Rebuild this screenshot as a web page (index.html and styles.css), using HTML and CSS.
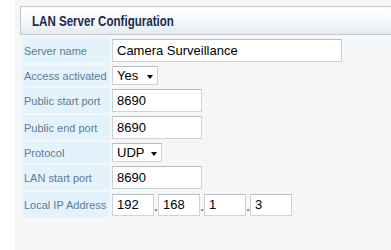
FILE: index.html
```html
<!DOCTYPE html>
<html>
<head>
<meta charset="utf-8">
<link rel="stylesheet" href="styles.css">
</head>
<body>
<div class="panel">
  <div class="header"><span class="title">LAN Server Configuration</span></div>
  <table class="form">
    <tr class="tall">
      <td class="label">Server name</td>
      <td class="value"><div class="input wide">Camera Surveillance</div></td>
    </tr>
    <tr class="short">
      <td class="label">Access activated</td>
      <td class="value"><div class="select sel-yes"><span>Yes</span><span class="arrow"></span></div></td>
    </tr>
    <tr class="tall">
      <td class="label">Public start port</td>
      <td class="value"><div class="input port">8690</div></td>
    </tr>
    <tr class="tall">
      <td class="label">Public end port</td>
      <td class="value"><div class="input port">8690</div></td>
    </tr>
    <tr class="short">
      <td class="label">Protocol</td>
      <td class="value"><div class="select sel-udp"><span>UDP</span><span class="arrow"></span></div></td>
    </tr>
    <tr class="tall">
      <td class="label">LAN start port</td>
      <td class="value"><div class="input port">8690</div></td>
    </tr>
    <tr class="tall">
      <td class="label">Local IP Address</td>
      <td class="value">
        <div class="ip">
          <div class="input octet">192</div><span class="dot">.</span>
          <div class="input octet">168</div><span class="dot">.</span>
          <div class="input octet">1</div><span class="dot">.</span>
          <div class="input octet">3</div>
        </div>
      </td>
    </tr>
  </table>
</div>
</body>
</html>
```
FILE: styles.css
```css
html, body {
  margin: 0;
  padding: 0;
  background: #ffffff;
}
body {
  font-family: "Liberation Sans", Arial, sans-serif;
}
.panel {
  margin-left: 15px;
  height: 250px;
  box-sizing: border-box;
  background: #f5f6f8;
  padding: 6px 0 0 5px;
}
.header {
  height: 27px;
  border: 1px solid #c3c7cb;
  border-right: none;
  background: linear-gradient(to bottom, #ffffff 0%, #f8fafc 45%, #e2ebf2 100%);
  display: flex;
  align-items: center;
  padding-left: 11px;
}
.title {
  display: inline-block;
  font-weight: bold;
  font-size: 15px;
  color: #1b2a4c;
  transform: scaleX(0.77);
  transform-origin: left center;
  white-space: nowrap;
}
.form {
  border-collapse: separate;
  border-spacing: 2px;
  margin-top: 1px;
}
.form td {
  padding: 0;
}
.tall td { height: 25px; }
.short td { height: 21px; }
.label {
  width: 85px;
  background: #e3f2fb;
  color: #5f7b95;
  font-size: 11px;
  padding-left: 2px !important;
  white-space: nowrap;
  vertical-align: middle;
}
.value {
  padding-left: 1px !important;
  vertical-align: middle;
}
.input {
  box-sizing: border-box;
  height: 23px;
  background: #ffffff;
  border: 1px solid #cfd3d7;
  border-top-color: #b9bdc2;
  font-size: 13px;
  color: #000000;
  padding-left: 4px;
  display: flex;
  align-items: center;
}
.wide { width: 230px; }
.port { width: 90px; }
.ip {
  display: flex;
  align-items: center;
}
.octet {
  width: 42px;
  height: 22px;
}
.dot {
  width: 4px;
  text-align: center;
  font-size: 13px;
  font-weight: bold;
  color: #5f7b95;
  padding-top: 4px;
}
.select {
  box-sizing: border-box;
  height: 19px;
  background: #ffffff;
  border: 1px solid #cfd3d7;
  border-top-color: #b9bdc2;
  font-size: 13px;
  color: #000000;
  padding-left: 4px;
  padding-right: 4px;
  display: flex;
  align-items: center;
  justify-content: space-between;
}
.sel-yes { width: 46px; }
.sel-udp { width: 50px; }
.arrow {
  width: 0;
  height: 0;
  border-left: 3.5px solid transparent;
  border-right: 3.5px solid transparent;
  border-top: 4px solid #000000;
  margin-top: 2px;
}
```
